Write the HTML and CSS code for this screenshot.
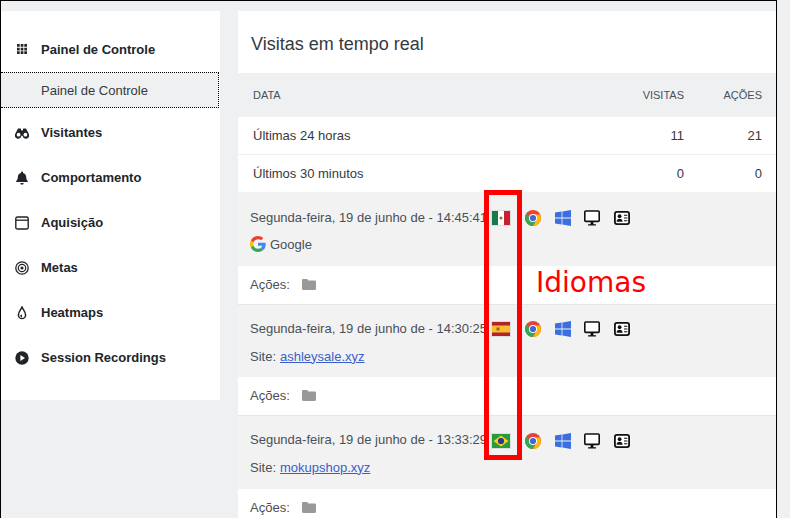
FILE: index.html
```html
<!DOCTYPE html>
<html lang="pt-BR">
<head>
  <meta charset="UTF-8" />
  <title>Visitas em tempo real</title>
  <link rel="stylesheet" href="styles.css">
</head>
<body>
  <svg class="defs" width="0" height="0">
    <defs>
      <symbol id="chrome" viewBox="0 0 16 16">
        <circle cx="8" cy="8" r="8" fill="#ea4335"/>
        <path d="M8 8 1 4.200A8 8 0 0 0 8 16l3.500-6z" fill="#34a853"/>
        <path d="M8 4.500h7A8 8 0 0 1 8 16l3.500-6z" fill="#fbbc05"/>
        <circle cx="8" cy="8" r="4" fill="#fff"/>
        <circle cx="8" cy="8" r="3.100" fill="#4a62d8"/>
      </symbol>
      <symbol id="windows" viewBox="0 0 16 16">
        <path d="M0 2.400 6.600 1.500v6H0zM7.400 1.400 16 0v7.500H7.400zM0 8.400h6.600v6.100L0 13.600zM7.400 8.400H16V16l-8.600-1.400z" fill="#3b6fe0"/>
      </symbol>
      <symbol id="desktop" viewBox="0 0 16 16">
        <rect x=".8" y="1" width="14.400" height="10.400" rx="1" fill="#fff" stroke="#111" stroke-width="1.600"/>
        <path d="M6.600 12h2.800v2.200H12V15.500H4v-1.300h2.600z" fill="#111"/>
      </symbol>
      <symbol id="contact" viewBox="0 0 16 14">
        <rect x=".9" y=".9" width="14.200" height="12.200" rx="2" fill="#fff" stroke="#111" stroke-width="1.800"/>
        <circle cx="5.600" cy="5.200" r="1.900" fill="#111"/>
        <path d="M2.600 10.800c0-2 1.300-3.100 3-3.100s3 1.100 3 3.100z" fill="#111"/>
        <path d="M10 4.200h3.400M10 7h3.400M10 9.800h3.400" stroke="#111" stroke-width="1.100"/>
      </symbol>
      <symbol id="folder" viewBox="0 0 14 11">
        <path d="M1.200 0h3.900l1.400 1.600h6.300c.6 0 1.200.5 1.200 1.200v7c0 .7-.6 1.200-1.200 1.200H1.200C.5 11 0 10.500 0 9.800V1.200C0 .5.500 0 1.200 0z" fill="#999"/>
      </symbol>
    </defs>
  </svg>

  <div class="frame">
    <aside class="sidebar">
      <ul class="menu">
        <li class="menu-item first">
          <svg class="menu-icon" viewBox="0 0 14 14"><path d="M2 2h2.700v2.700H2zM5.700 2h2.700v2.700H5.700zM9.300 2H12v2.700H9.300zM2 5.700h2.700v2.700H2zM5.700 5.700h2.700v2.700H5.700zM9.300 5.700H12v2.700H9.300zM2 9.300h2.700V12H2zM5.700 9.300h2.700V12H5.700zM9.300 9.300H12V12H9.300z" fill="#212529"/></svg>
          Painel de Controle
        </li>
        <li class="menu-sub">Painel de Controle</li>
        <li class="menu-item">
          <svg class="menu-icon" viewBox="0 0 14 14"><path d="M3 2.500h2.800l.5 2h1.400l.5-2H11l2.600 5a3.300 3.300 0 1 1-6 2.300H6.400a3.300 3.300 0 1 1-6-2.300z" fill="#212529"/><circle cx="3.600" cy="8.700" r="1.900" fill="#fff"/><circle cx="10.400" cy="8.700" r="1.900" fill="#fff"/></svg>
          Visitantes
        </li>
        <li class="menu-item">
          <svg class="menu-icon" viewBox="0 0 14 14"><path d="M7 .5c.5 0 1 .4 1 1v.5c2 .4 3.200 2 3.200 4.100 0 2.700 1.100 3.400 1.600 4.100v.8H1.200v-.8c.5-.7 1.600-1.400 1.600-4.100C2.800 4 4 2.400 6 2v-.5c0-.6.500-1 1-1zM5.300 12h3.400a1.700 1.700 0 0 1-3.400 0z" fill="#212529"/></svg>
          Comportamento
        </li>
        <li class="menu-item">
          <svg class="menu-icon" viewBox="0 0 14 14"><rect x=".8" y="1" width="12.400" height="12" rx="1.600" fill="none" stroke="#212529" stroke-width="1.400"/><path d="M1 4.200h12" stroke="#212529" stroke-width="1.300"/></svg>
          Aquisição
        </li>
        <li class="menu-item">
          <svg class="menu-icon" viewBox="0 0 14 14"><circle cx="7" cy="7" r="6.200" fill="none" stroke="#212529" stroke-width="1.300"/><circle cx="7" cy="7" r="3.700" fill="none" stroke="#212529" stroke-width="1.200"/><circle cx="7" cy="7" r="1.600" fill="#212529"/></svg>
          Metas
        </li>
        <li class="menu-item">
          <svg class="menu-icon" viewBox="0 0 14 14"><path d="M7 1c.9 2.400 3.600 4.600 3.600 8a3.600 3.600 0 0 1-7.200 0C3.400 5.600 6.100 3.400 7 1z" fill="#fff" stroke="#212529" stroke-width="1.500"/><path d="M5.200 9.200A2 2 0 0 0 7 11.300V8.600z" fill="#212529"/></svg>
          Heatmaps
        </li>
        <li class="menu-item">
          <svg class="menu-icon" viewBox="0 0 14 14"><circle cx="7" cy="7" r="6.700" fill="#212529"/><path d="M5.400 4 10 7l-4.600 3z" fill="#fff"/></svg>
          Session Recordings
        </li>
      </ul>
    </aside>

    <main class="panel">
      <h1 class="panel-title">Visitas em tempo real</h1>
      <div class="table-row table-head">
        <span class="cell-name">DATA</span>
        <span class="cell-visits">VISITAS</span>
        <span class="cell-actions">AÇÕES</span>
      </div>
      <div class="table-row">
        <span class="cell-name">Últimas 24 horas</span>
        <span class="cell-visits">11</span>
        <span class="cell-actions">21</span>
      </div>
      <div class="table-row table-last">
        <span class="cell-name">Últimos 30 minutos</span>
        <span class="cell-visits">0</span>
        <span class="cell-actions">0</span>
      </div>

      <section class="visit">
        <div class="visit-info">
          <div class="visit-top">
            <span class="visit-date">Segunda-feira, 19 de junho de - 14:45:41</span>
            <svg class="flag" viewBox="0 0 18 14"><rect width="6" height="14" fill="#1b7a4b"/><rect x="6" width="6" height="14" fill="#fff"/><rect x="12" width="6" height="14" fill="#c8202f"/><circle cx="9" cy="7" r="1.500" fill="#8a6b3c"/></svg>
            <svg class="icon"><use href="#chrome"/></svg>
            <svg class="icon"><use href="#windows"/></svg>
            <svg class="icon"><use href="#desktop"/></svg>
            <svg class="icon"><use href="#contact"/></svg>
          </div>
          <div class="visit-source">
            <svg class="google" viewBox="0 0 48 48"><path fill="#EA4335" d="M24 9.500c3.500 0 6.700 1.200 9.200 3.600l6.900-6.900C35.900 2.400 30.500 0 24 0 14.600 0 6.500 5.400 2.600 13.200l8 6.200C12.400 13.700 17.700 9.500 24 9.500z"/><path fill="#4285F4" d="M47 24.500c0-1.600-.2-3.100-.4-4.500H24v9h13c-.6 3-2.300 5.500-4.800 7.200l7.700 6C44.400 38 47 31.800 47 24.500z"/><path fill="#FBBC05" d="M10.500 28.600a14.500 14.500 0 0 1 0-9.200l-8-6.200a24 24 0 0 0 0 21.600z"/><path fill="#34A853" d="M24 48c6.500 0 11.900-2.100 15.900-5.800l-7.700-6c-2.100 1.400-4.900 2.300-8.200 2.300-6.300 0-11.600-4.200-13.500-10l-8 6.200C6.500 42.600 14.600 48 24 48z"/></svg>
            Google
          </div>
        </div>
        <div class="visit-actions">Ações: <svg class="folder"><use href="#folder"/></svg></div>
      </section>

      <section class="visit">
        <div class="visit-info">
          <div class="visit-top">
            <span class="visit-date">Segunda-feira, 19 de junho de - 14:30:25</span>
            <svg class="flag" viewBox="0 0 18 14"><rect width="18" height="14" fill="#b5202c"/><rect y="3.500" width="18" height="7" fill="#f5c02c"/><rect x="4.500" y="5.500" width="3" height="3" fill="#b5562c"/></svg>
            <svg class="icon"><use href="#chrome"/></svg>
            <svg class="icon"><use href="#windows"/></svg>
            <svg class="icon"><use href="#desktop"/></svg>
            <svg class="icon"><use href="#contact"/></svg>
          </div>
          <div class="visit-source">Site: <a href="#">ashleysale.xyz</a></div>
        </div>
        <div class="visit-actions">Ações: <svg class="folder"><use href="#folder"/></svg></div>
      </section>

      <section class="visit">
        <div class="visit-info">
          <div class="visit-top">
            <span class="visit-date">Segunda-feira, 19 de junho de - 13:33:29</span>
            <svg class="flag" viewBox="0 0 18 14"><rect width="18" height="14" fill="#2a9a3f"/><path d="M9 1.500 16.500 7 9 12.500 1.500 7z" fill="#f2d21f"/><circle cx="9" cy="7" r="3.100" fill="#2b3a8c"/></svg>
            <svg class="icon"><use href="#chrome"/></svg>
            <svg class="icon"><use href="#windows"/></svg>
            <svg class="icon"><use href="#desktop"/></svg>
            <svg class="icon"><use href="#contact"/></svg>
          </div>
          <div class="visit-source">Site: <a href="#">mokupshop.xyz</a></div>
        </div>
        <div class="visit-actions">Ações: <svg class="folder"><use href="#folder"/></svg></div>
      </section>
    </main>
  </div>

  <div class="highlight"></div>
  <div class="highlight-label">Idiomas</div>
</body>
</html>
```

FILE: styles.css
```css
* {
  margin: 0;
  padding: 0;
  box-sizing: border-box;
}

html,
body {
  height: 518px;
  overflow: hidden;
}

body {
  background: #eef0f2;
  font-family: "Liberation Sans", Arial, sans-serif;
  color: #212529;
  position: relative;
}

.defs {
  position: absolute;
}

.frame {
  width: 777px;
  height: 518px;
  border-top: 1px solid #000;
  border-left: 1px solid #000;
  border-right: 1px solid #000;
  padding-top: 10px;
  display: flex;
  align-items: flex-start;
  gap: 18px;
}

.sidebar {
  width: 219px;
  height: 389px;
  background: #fff;
  padding-top: 15px;
  flex-shrink: 0;
}

.menu {
  list-style: none;
}

.menu-item {
  height: 45px;
  display: flex;
  align-items: center;
  padding-left: 14px;
  font-size: 13px;
  font-weight: 700;
}

.menu-item.first {
  height: 46px;
}

.menu-icon {
  width: 14px;
  height: 14px;
  margin-right: 12px;
  flex-shrink: 0;
}

.menu-sub {
  height: 36px;
  display: flex;
  align-items: center;
  padding-left: 40px;
  font-size: 13px;
  background: #eef0f2;
  border: 1px dotted #000;
  border-left: 0;
  color: #343a40;
  margin: 0 1px 2px 0;
}

.panel {
  flex: 1;
  background: #fff;
  height: 507px;
  overflow: hidden;
}

.panel-title {
  height: 62px;
  display: flex;
  align-items: center;
  padding: 4px 0 0 13px;
  font-size: 18px;
  font-weight: 400;
  color: #343a40;
}

.table-row {
  display: flex;
  align-items: center;
  height: 38px;
  padding: 0 14px 0 15px;
  font-size: 13px;
  color: #343a40;
  border-bottom: 1px solid #eceeef;
}

.table-head {
  height: 44px;
  background: #eef0f2;
  font-size: 11px;
  color: #495057;
  border-bottom: 0;
}

.table-last {
  height: 37px;
  border-bottom: 0;
}

.cell-name {
  flex: 1;
}

.cell-visits {
  width: 60px;
  text-align: right;
}

.cell-actions {
  width: 78px;
  text-align: right;
}

.visit-info {
  background: #f2f2f2;
  height: 72px;
  padding: 10px 12px 0;
}

.visit:nth-of-type(1) .visit-info {
  height: 74px;
  padding-top: 12px;
}

.visit:last-child .visit-info {
  height: 73px;
}

.visit-top {
  display: flex;
  align-items: center;
  height: 26px;
}

.visit-date {
  font-size: 13px;
  color: #495057;
  width: 241px;
  white-space: nowrap;
}

.flag {
  width: 20px;
  height: 16px;
  margin: 2px 14px 0 0;
  border: 1px solid #ddd;
}

.icon {
  width: 16px;
  height: 16px;
  margin: 2px 13.7px 0 0;
}

.visit:last-child .flag,
.visit:last-child .icon {
  margin-top: 4px;
}

.visit-source {
  display: flex;
  align-items: center;
  gap: 4px;
  height: 26px;
  margin-top: 2px;
  font-size: 13px;
  color: #495057;
}

.visit:nth-of-type(1) .visit-source {
  margin-top: 1px;
}

.visit-source a {
  color: #3a5fcd;
}

.google {
  width: 16px;
  height: 16px;
}

.visit-actions {
  height: 39px;
  display: flex;
  align-items: center;
  padding: 0 0 1px 12px;
  font-size: 13px;
  color: #495057;
  background: #fff;
  border-bottom: 1px solid #e6e6e6;
}

.folder {
  width: 14px;
  height: 11px;
  margin-left: 12px;
}

.highlight {
  position: absolute;
  left: 484px;
  top: 190px;
  width: 38px;
  height: 270px;
  border: 5px solid #f00;
}

.highlight-label {
  position: absolute;
  left: 536px;
  top: 266px;
  font-family: "DejaVu Sans", sans-serif;
  font-size: 28px;
  color: #f00;
}
```
